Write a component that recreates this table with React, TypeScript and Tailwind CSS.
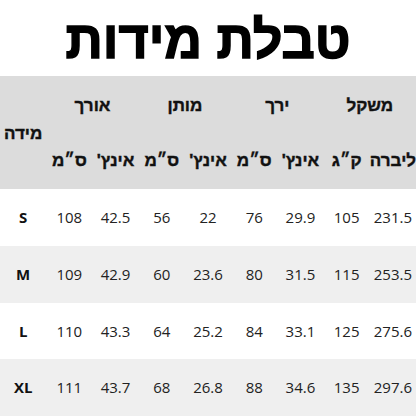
import React from "react";

const groups = ["משקל", "ירך", "מותן", "אורך"];
const subs = ["ליברה", "ק\u05F4ג", "אינץ'", "ס\u05F4מ", "אינץ'", "ס\u05F4מ", "אינץ'", "ס\u05F4מ"];
const rows = [
  { size: "S", vals: ["231.5", "105", "29.9", "76", "22", "56", "42.5", "108"], bg: "bg-white" },
  { size: "M", vals: ["253.5", "115", "31.5", "80", "23.6", "60", "42.9", "109"], bg: "bg-[#efefef]" },
  { size: "L", vals: ["275.6", "125", "33.1", "84", "25.2", "64", "43.3", "110"], bg: "bg-white" },
  { size: "XL", vals: ["297.6", "135", "34.6", "88", "26.8", "68", "43.7", "111"], bg: "bg-[#efefef]" },
];

export default function App() {
  return (
    <div className="w-[416px] h-[416px] bg-white overflow-hidden flex flex-col" dir="rtl">
      <div className="h-[76px] flex items-center justify-center">
        <h1 className="text-[52px] leading-none font-black text-black [-webkit-text-stroke:1.5px_black] [font-family:'Liberation_Sans','DejaVu_Sans',sans-serif] pt-1">
          טבלת מידות
        </h1>
      </div>
      <div className="h-[113px] bg-[#dcdcdc] grid grid-cols-9 grid-rows-[28px_28px] gap-y-[27px] pt-[16px] text-[17px] font-bold text-[#111] [-webkit-text-stroke:0.4px_#111] [font-family:'Liberation_Sans','DejaVu_Sans',sans-serif]">
        {groups.map((g) => (
          <div key={g} className="col-span-2 flex items-center justify-center">
            {g}
          </div>
        ))}
        <div className="row-span-2 flex items-center justify-center">מידה</div>
        {subs.map((s, i) => (
          <div key={i} className="flex items-center justify-center whitespace-nowrap">
            {s}
          </div>
        ))}
      </div>
      {rows.map((r) => (
        <div key={r.size} className={`flex-1 grid grid-cols-9 items-center text-[15px] text-[#222] [font-family:'Open_Sans',sans-serif] ${r.bg}`}>
          {r.vals.map((v, i) => (
            <div key={i} className="text-center" dir="ltr">
              {v}
            </div>
          ))}
          <div className="text-center font-bold text-[#111]">{r.size}</div>
        </div>
      ))}
    </div>
  );
}
